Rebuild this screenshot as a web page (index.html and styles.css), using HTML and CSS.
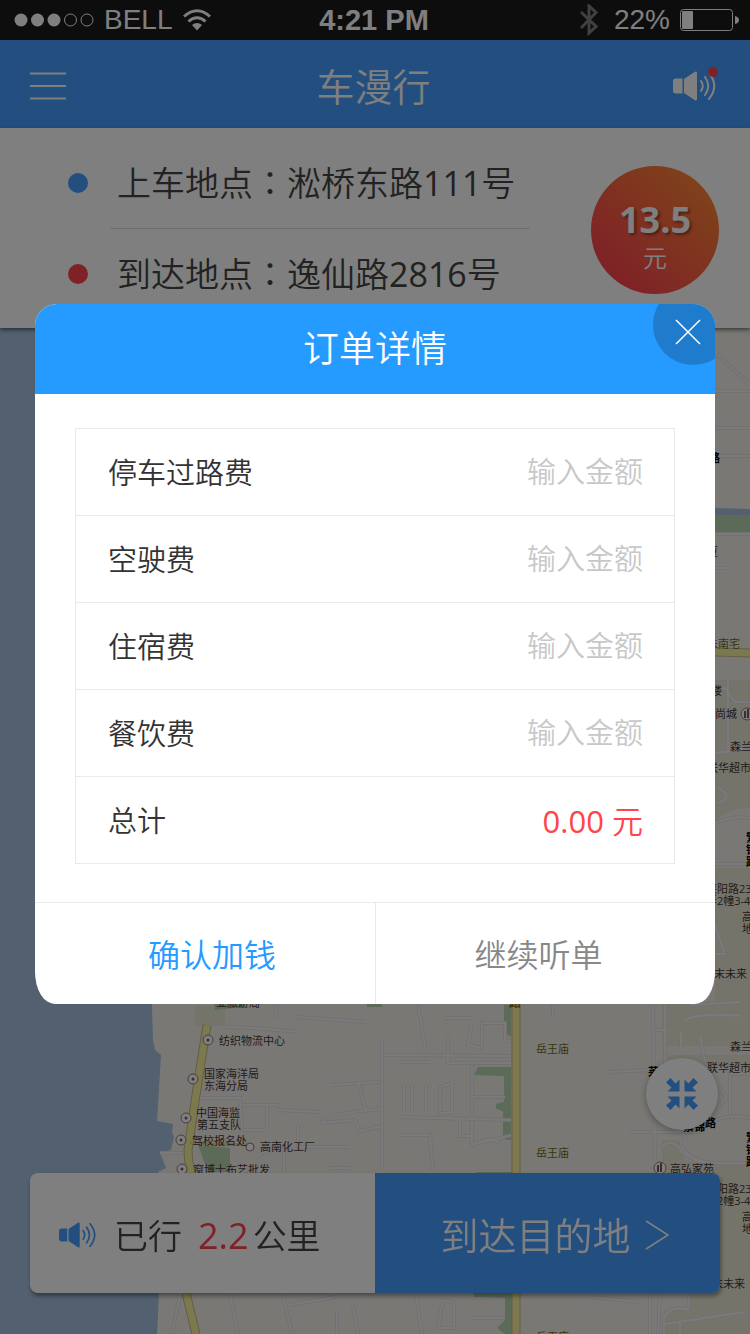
FILE: index.html
```html
<!DOCTYPE html>
<html lang="zh-CN">
<head>
<meta charset="utf-8">
<meta name="viewport" content="width=device-width, initial-scale=1">
<title>车漫行</title>
<link rel="stylesheet" href="styles.css">
</head>
<body>
<svg class="sprite" aria-hidden="true">
  <symbol id="speaker" viewBox="0 0 44 30">
    <path fill="currentColor" d="M3 7.500H9.500V22.500H3Q0 22.500 0 20V10Q0 7.500 3 7.500ZM11 8L22 .8Q24 0 24 2V28Q24 30 22 29.200L11 22Z"/>
    <path fill="none" stroke="currentColor" stroke-width="2" stroke-linecap="round" d="M28 10Q31.500 15 28 20M32 6Q38.500 15 32 24M36 2Q46.500 15 36 28"/>
  </symbol>
</svg>
<div class="screen">
  <div class="status">
    <div class="status-side">
      <svg width="80" height="16" viewBox="0 0 80 16" aria-hidden="true">
        <g fill="#fff"><circle cx="7" cy="8" r="6.500"/><circle cx="23.500" cy="8" r="6.500"/><circle cx="40" cy="8" r="6.500"/></g>
        <g fill="none" stroke="#fff"><circle cx="56.500" cy="8" r="6"/><circle cx="73" cy="8" r="6"/></g>
      </svg>
      <span>BELL</span>
      <svg width="28" height="22" viewBox="0 0 28 22" aria-hidden="true">
        <path fill="none" stroke="#fff" stroke-width="3" d="M1 7.500Q14-4 27 7.500M5.500 12.500Q14 5 22.500 12.500"/>
        <path fill="#fff" d="M9 16Q14 12 19 16L14 21.500Z"/>
      </svg>
    </div>
    <strong class="clock">4:21 PM</strong>
    <div class="status-side status-end">
      <svg width="18" height="32" viewBox="0 0 18 32" aria-hidden="true"><path fill="none" stroke="#808080" stroke-width="3" d="M1 8L16 22.500L9 29V2L16 8.500L1 24"/></svg>
      <span class="percent">22%</span>
      <svg width="60" height="22" viewBox="0 0 60 22" aria-hidden="true"><rect x=".5" y=".5" width="52" height="21" rx="3" fill="none" stroke="#fff"/><rect x="2" y="2" width="11" height="18" rx="1" fill="#fff"/><path d="M55 7Q59 8 59 11T55 15Z" fill="#fff"/></svg>
    </div>
  </div>

  <header class="topbar">
    <button class="icon-button" type="button" aria-label="菜单">
      <svg width="36" height="28" viewBox="0 0 36 28"><path stroke="#fff" stroke-width="2" d="M0 1.500H36M0 14H36M0 26.500H36"/></svg>
    </button>
    <h1>车漫行</h1>
    <button class="icon-button notice" type="button" aria-label="语音播报">
      <svg width="44" height="30"><use href="#speaker"/></svg>
    </button>
  </header>

  <section class="trip">
    <ul class="stops">
      <li class="stop start"><p>上车地点<span class="colon" lang="zh-TW">：</span>淞桥东路<span class="num">111</span>号</p></li>
      <li class="stop end"><p>到达地点<span class="colon" lang="zh-TW">：</span>逸仙路<span class="num">2816</span>号</p></li>
    </ul>
    <div class="fare"><strong>13.5</strong><span>元</span></div>
  </section>

  <main class="stage">
    <svg class="map" viewBox="0 328 750 1006" preserveAspectRatio="xMidYMin slice" aria-label="地图">
      <defs>
        <path id="roads" d="M715 352L750 385M715 391H750M715 428H750M715 456H750M715 534H750M715 568H725M728 680V750M715 690L725 688L735 702H750M715 823Q735 815 750 818M715 864H750M718 788Q735 797 718 803M715 925L725 954H715M715 753L750 748"/>
        <path id="town" d="M225 1027L255 1028L300 1032M297 1017L365 1022M275 1005L276 1018M382 1040V1170M385 1055H430M430 1062H400M330 1085L380 1082M358 1082L366 1112M195 1098H240L242 1128M243 1105H278M277 1110L320 1112M267 1105V1130M242 1130H263M298 1125V1147H350M350 1168H330M322 1123Q325 1113 382 1109M322 1123L355 1120L360 1131L382 1126M160 1153H185M284 1145V1172M255 1157L280 1144M418 1004L426 1052M445 1018H472M448 1035V1063H510M400 1055L510 1056M472 1022L468 1045L482 1048V1023H505V1040L512 1042M472 1065V1145L512 1135M400 1117L512 1120M404 1085V1110M412 1085V1112M426 1085V1112M455 1082L440 1087V1113H452V1080M472 1097H505M460 1120V1136H472M472 1145Q495 1135 500 1144M400 1135H430L433 1170M553 1005V1016M610 1072L650 1070M630 1132H705M653 1004L655 1160M665 1005V1080M655 1030H668M700 1035L705 1062M685 1020Q700 1012 740 1016M690 1005L740 1002M681 1047L681 1032M730 1074V1115M730 1074H750M718 1088Q733 1098 720 1104M670 1132L700 1130Q720 1112 750 1118M680 1140Q685 1162 715 1163H750M662 1146Q674 1138 682 1152L700 1163M416 1295L422 1334M180 1295L172 1334M230 1295L238 1334M283 1295L292 1334M337 1310V1334M353 1305L358 1334M290 1305L335 1297M443 1300L438 1328H454V1302ZM473 1318H505M590 1297L640 1302M650 1293V1334M660 1293L658 1334M690 1293L688 1310Q670 1305 664 1318V1334M664 1324L705 1318L745 1312M680 1334V1322"/>
      </defs>
      <rect class="land" y="328" width="750" height="1006"/>
      <path class="sea" d="M0 328H152V1008L153 1040L155 1050L161 1055L157 1121L173 1124L172 1132L174 1137L171 1150L160 1153L166 1168L158 1172L159 1293L157 1334H0Z"/>
      <path class="estate" d="M715 680H750V808Q725 808 715 823ZM715 868H750V1046H662V1004H715ZM668 1055H750V1067H668ZM662 1140H680L685 1162H750V1334H664V1310H690V1175H662ZM195 1006H225V1026H194Z"/>
      <path class="river" d="M715 508L750 509V515H715Z"/>
      <path class="green" d="M715 515H750V532H715ZM198 1145L230 1148V1172H208ZM214 1004H245V1007L215 1010ZM367 1004H382V1007H367ZM504 1005H511V1036L504 1034ZM478 1067H511V1140L503 1139V1111L496 1109V1104L504 1102V1076L474 1075ZM476 1172H512V1174H476ZM474 1293H512V1334H505L497 1328L505 1320V1298L474 1297Z"/>
      <use href="#roads" class="road-edge"/><use href="#roads" class="road"/>
      <use href="#town" class="road-edge"/><use href="#town" class="road"/>
      <path class="main-edge" d="M516 1004V1334M207 1025L196 1095L188 1150Q188 1162 191 1173M186 1293L196 1334M715 652L750 653"/>
      <path class="main" d="M516 1004V1334M207 1025L196 1095L188 1150Q188 1162 191 1173M186 1293L196 1334M715 652L750 653"/>
      <path class="lane" d="M190 1143L250 1145"/>
      <g class="pins"><circle cx="208" cy="1040" r="5"/><circle cx="193" cy="1079" r="5"/><circle cx="186" cy="1118" r="5"/><circle cx="181" cy="1140" r="5"/><circle cx="250" cy="1147" r="4"/><circle cx="182" cy="1169" r="5"/><circle cx="747" cy="714" r="6"/><circle cx="660" cy="1168" r="6"/></g>
      <g class="pin-dots"><circle cx="208" cy="1040" r="1.500"/><circle cx="193" cy="1079" r="1.500"/><circle cx="186" cy="1118" r="1.500"/><circle cx="181" cy="1140" r="1.500"/><circle cx="182" cy="1169" r="1.500"/><path d="M657 1165H659V1172H657ZM660 1163H662V1172H660ZM744 711H746V718H744ZM747 709H749V718H747Z"/></g>
      <g class="places">
        <text x="216" y="1007">业旅游局</text>
        <text x="219" y="1045">纺织物流中心</text><text x="204" y="1078">国家海洋局</text><text x="204" y="1090">东海分局</text>
        <text x="196" y="1117">中国海监</text><text x="197" y="1129">第五支队</text><text x="192" y="1145">驾校报名处</text><text x="260" y="1151">高南化工厂</text><text x="193" y="1174">窗博士布艺批发</text>
        <text x="707" y="556">厦</text><text x="711" y="695">楼</text><text x="715" y="718">尚城</text>
        <text x="730" y="751">森兰</text><text x="707" y="772">联华超市</text><text x="706" y="893">莱阳路23</text><text x="706" y="905">弄2幢3-4</text><text x="742" y="921">高</text><text x="742" y="933">地</text><text x="714" y="978">末未来</text>
        <text x="730" y="1051">森兰</text><text x="707" y="1072">联华超市</text><text x="670" y="1173">高弘家苑</text><text x="706" y="1193">莱阳路23</text><text x="706" y="1205">弄2幢3-4</text><text x="742" y="1221">高</text><text x="742" y="1233">地</text><text x="712" y="1288">末未来</text>
      </g>
      <g class="temples"><text x="707" y="648">朱南宅</text><text x="536" y="1053">岳王庙</text><text x="536" y="1157">岳王庙</text><text x="536" y="1341">岳王庙</text></g>
      <g class="street-names"><text x="709" y="462">路</text><text x="746" y="842">繁</text><text x="746" y="854">锦</text><text x="746" y="866">路</text><text x="648" y="1076">莱</text><text x="683" y="1131">繁锦</text><text x="705" y="1127">路</text><text x="746" y="1142">繁</text><text x="746" y="1154">锦</text><text x="746" y="1166">路</text></g>
      <text class="road-name" x="509" y="1007">路</text>
    </svg>
    <button class="recenter" type="button" aria-label="回到当前位置">
      <svg width="32" height="32" viewBox="0 0 32 32"><g fill="#449eff"><path id="arrow" d="M13.500 13.500V1.500L9.500 5.500L4.500 0L0 4.500L5.500 9.500L1.500 13.500Z"/><use href="#arrow" transform="matrix(-1 0 0 1 32 0)"/><use href="#arrow" transform="matrix(1 0 0 -1 0 32)"/><use href="#arrow" transform="matrix(-1 0 0 -1 32 32)"/></g></svg>
    </button>
    <div class="ride">
      <div class="distance">
        <svg width="38" height="26"><use href="#speaker"/></svg>
        <p>已行<b>2.2</b>公里</p>
      </div>
      <button class="arrive" type="button">到达目的地
        <svg width="24" height="30" viewBox="0 0 24 30" aria-hidden="true"><path fill="none" stroke="#fff" stroke-width="1.500" d="M1 1L23 15L1 29"/></svg>
      </button>
    </div>
  </main>

  <div class="overlay">
    <form class="dialog" role="dialog" aria-labelledby="dialog-title">
      <div class="dialog-head">
        <h2 id="dialog-title">订单详情</h2>
        <button class="close" type="button" aria-label="关闭"><svg width="26" height="26" viewBox="0 0 26 26"><path stroke="#fff" stroke-width="1.500" d="M1 1L25 25M25 1L1 25"/></svg></button>
      </div>
      <div class="fees">
        <div class="fee"><label for="parking">停车过路费</label><input id="parking" type="text" inputmode="decimal" placeholder="输入金额"></div>
        <div class="fee"><label for="empty">空驶费</label><input id="empty" type="text" inputmode="decimal" placeholder="输入金额"></div>
        <div class="fee"><label for="lodging">住宿费</label><input id="lodging" type="text" inputmode="decimal" placeholder="输入金额"></div>
        <div class="fee"><label for="meals">餐饮费</label><input id="meals" type="text" inputmode="decimal" placeholder="输入金额"></div>
        <div class="fee"><span>总计</span><output class="total"><span class="num">0.00</span> 元</output></div>
      </div>
      <div class="actions">
        <button class="confirm" type="button">确认加钱</button>
        <button class="resume" type="button">继续听单</button>
      </div>
    </form>
  </div>
</div>
</body>
</html>
```
FILE: styles.css
```css
* { box-sizing: border-box; }

body {
  margin: 0;
  font-family: "Open Sans", "Noto Sans CJK SC", sans-serif;
  font-weight: 350;
  color: #444;
}

h1, h2, p, ul { margin: 0; padding: 0; font-weight: inherit; }
button, input { font: inherit; border: 0; padding: 0; background: none; color: inherit; }
svg { display: block; flex: none; }
.sprite { position: absolute; width: 0; height: 0; }
.num { font-weight: 400; }

.screen {
  position: relative;
  display: flex;
  flex-direction: column;
  min-height: 100vh;
}

/* Status bar */
.status {
  display: grid;
  grid-template-columns: 1fr auto 1fr;
  align-items: center;
  height: 40px;
  padding: 0 12px 0 14px;
  background: #1a1a1a;
  color: #fff;
  font: 400 28px/40px "Liberation Sans", Arial, sans-serif;
}
.status-side { display: flex; align-items: center; gap: 10px; }
.status-end { justify-content: flex-end; margin-right: -2px; }
.percent { padding-left: 6px; }
.clock { padding-right: 4px; font-size: 29px; }

/* Title bar */
.topbar {
  display: grid;
  grid-template-columns: 1fr auto 1fr;
  align-items: center;
  height: 88px;
  padding: 4px 33px 0 30px;
  background: #449eff;
  color: #fff;
}
.topbar h1 { font-size: 38px; line-height: 48px; }
.icon-button { justify-self: start; }
.notice { position: relative; justify-self: end; }
.notice::after {
  content: "";
  position: absolute;
  top: -4px;
  right: -1px;
  width: 10px;
  height: 10px;
  border-radius: 50%;
  background: #ff444e;
}

/* Trip card */
.trip {
  position: relative;
  z-index: 1;
  display: flex;
  align-items: center;
  justify-content: space-between;
  padding: 10px 31px 9px 68px;
  background: #fff;
  box-shadow: 0 2px 4px rgba(0, 0, 0, .5);
}
.stops { flex: 0 1 462px; list-style: none; font-size: 34px; line-height: 46px; }
.stop {
  display: flex;
  align-items: center;
  gap: 29px;
  height: 90px;
  white-space: nowrap;
}
.stop::before {
  content: "";
  flex: none;
  width: 20px;
  height: 20px;
  border-radius: 50%;
  background: #449eff;
}
.end::before { background: #ff444e; }
.colon { font-family: "Noto Sans CJK TC", sans-serif; line-height: 1; }
.start {
  height: 91px;
  padding-bottom: 1px;
  background: linear-gradient(#dedede, #dedede) right bottom / calc(100% - 42px) 1px no-repeat;
}
.fare {
  display: flex;
  flex-direction: column;
  align-items: center;
  justify-content: center;
  width: 128px;
  height: 128px;
  margin-top: 2px;
  padding-top: 12px;
  border-radius: 50%;
  background: linear-gradient(45deg, #ff444e 15%, #ff9030 100%);
  color: #fff;
  font-size: 24px;
  line-height: 32px;
}
.fare strong {
  font-size: 36px;
  font-weight: 700;
  line-height: 44px;
  text-shadow: 2px 2px 3px rgba(0, 0, 0, .4);
}

/* Map */
.stage {
  position: relative;
  flex: 1;
  display: flex;
  flex-direction: column;
  justify-content: flex-end;
  padding: 0 30px 41px;
}
.map {
  position: absolute;
  inset: 0;
  width: 100%;
  height: 100%;
}
.land { fill: #f4f0ea; }
.sea { fill: #a4c0e0; }
.estate { fill: #ebe9d6; }
.river { fill: #a8c0e0; }
.green { fill: #b6d6ae; }
.road-edge, .road, .main-edge, .main, .lane { fill: none; }
.road-edge { stroke: #e4e0e2; stroke-width: 4; }
.road { stroke: #f7f5f5; stroke-width: 2; }
.main-edge { stroke: #ccb890; stroke-width: 9; }
.main { stroke: #f8f29c; stroke-width: 7; }
.lane { stroke: #e8d890; stroke-width: 3; }
.pins { fill: #fff; stroke: #8c7c7c; stroke-width: 1; }
.pin-dots { fill: #785858; }
.places, .temples { font-size: 11px; font-weight: 400; fill: #443838; }
.temples { fill: #706c10; }
.street-names { font-size: 11px; font-weight: 700; fill: #000; }
.road-name { font-size: 12px; font-weight: 700; fill: #887010; }

.recenter {
  position: relative;
  display: grid;
  place-items: center;
  align-self: flex-end;
  width: 72px;
  height: 72px;
  margin: 0 2px 43px;
  border-radius: 50%;
  background: #fff;
  box-shadow: 0 2px 6px rgba(0, 0, 0, .3);
}
.ride {
  position: relative;
  display: grid;
  grid-template-columns: 1fr 1fr;
  height: 120px;
  overflow: hidden;
  border-radius: 8px;
  background: #fff;
  filter: drop-shadow(1px 3px 2px rgba(0, 0, 0, .4));
}
.distance {
  display: flex;
  align-items: center;
  gap: 17px;
  padding: 3px 0 0 29px;
  font-size: 34px;
  white-space: nowrap;
}
.distance svg { color: #449eff; }
.distance b { margin: 0 4px 0 16px; font-size: 36px; font-weight: 400; color: #ff444e; }
.arrive {
  display: flex;
  align-items: center;
  justify-content: center;
  gap: 14px;
  padding: 4px 0 0 14px;
  background: #449eff;
  color: #fff;
  font-size: 38px;
  line-height: 48px;
  white-space: nowrap;
}

/* Dialog */
.overlay {
  position: absolute;
  inset: 0;
  z-index: 2;
  display: flex;
  align-items: center;
  padding: 0 35px 26px;
  background: rgba(0, 0, 0, .5);
}
.dialog {
  flex: 1;
  overflow: hidden;
  border-radius: 22px 22px 20px 20px / 22px 22px 32px 32px;
  background: #fff;
  color: #333;
}
.dialog-head {
  position: relative;
  background: #259aff;
  color: #fff;
  text-align: center;
}
.dialog-head h2 { font-size: 36px; line-height: 90px; }
.close {
  position: absolute;
  top: -19px;
  right: -18px;
  display: grid;
  place-items: center;
  width: 80px;
  height: 80px;
  padding: 14px 10px 0 0;
  border-radius: 50%;
  background: #1f7bcc;
}
.fees {
  margin: 34px 40px 38px;
  border: 1px solid #eaeaea;
  font-size: 29px;
}
.fee {
  display: flex;
  align-items: center;
  justify-content: space-between;
  height: 87px;
  padding: 0 31px 2px 32px;
}
.fee + .fee { border-top: 1px solid #eaeaea; }
.fee:first-child { height: 86px; }
.fee input { flex: 1; min-width: 0; text-align: right; outline: 0; }
.fee input::placeholder { color: #c8c8c8; opacity: 1; }
.total { font-size: 31px; color: #ff444a; }
.actions {
  display: grid;
  grid-template-columns: 1fr 1fr;
  height: 102px;
  border-top: 1px solid #eaeaea;
  font-size: 32px;
}
.confirm { padding-left: 14px; color: #259aff; }
.resume { padding-right: 14px; border-left: 1px solid #eaeaea; color: #888; }
.confirm, .resume { padding-bottom: 2px; }
```
